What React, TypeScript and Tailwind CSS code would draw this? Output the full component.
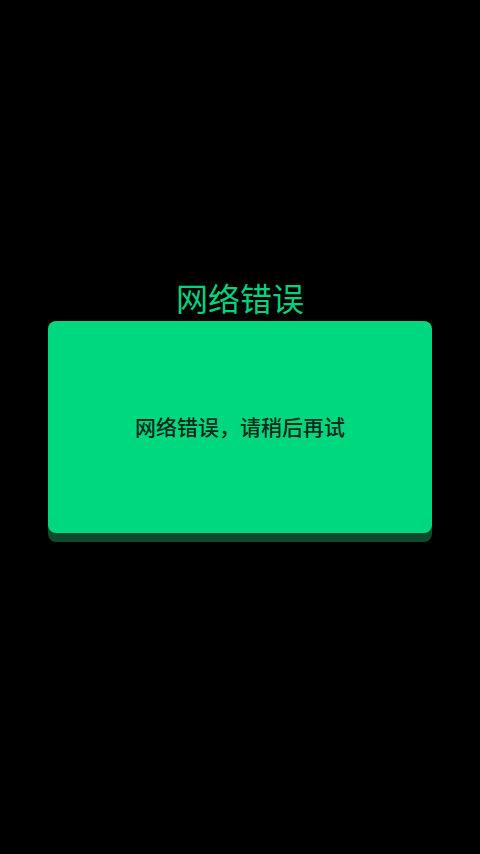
export default function App() {
  return (
    <div
      className="w-[480px] h-[854px] bg-black flex flex-col items-center pt-[278px]"
      style={{ fontFamily: '"Noto Sans CJK SC", "Noto Sans", sans-serif' }}
    >
      {/* TITLE */}
      <h1 className="text-[32px] leading-[38px] text-[#00d27e] mb-[5px]">网络错误</h1>

      {/* CARD */}
      <div className="w-[384px] h-[212px] rounded-lg bg-[#00d880] shadow-[0_9px_0_#0b4a2f] flex items-center justify-center">
        <p className="text-[21px] font-medium text-[#0a2a1a]">网络错误，请稍后再试</p>
      </div>
    </div>
  );
}
